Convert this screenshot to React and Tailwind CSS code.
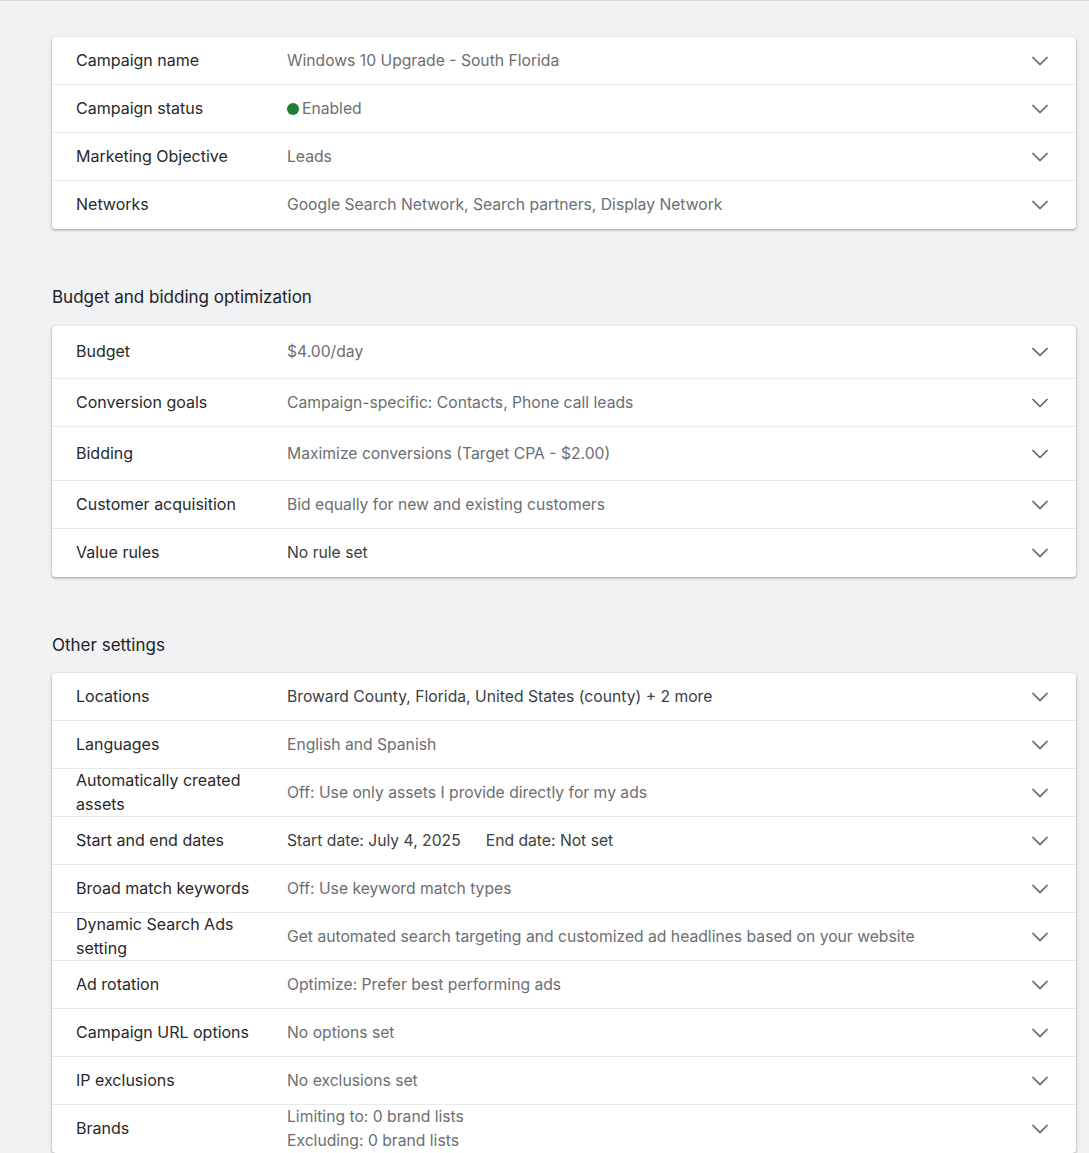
import { ChevronDown } from 'lucide-react'

const overview = [
  { label: 'Campaign name', value: 'Windows 10 Upgrade - South Florida' },
  { label: 'Campaign status', value: 'Enabled', status: true },
  { label: 'Marketing Objective', value: 'Leads' },
  { label: 'Networks', value: 'Google Search Network, Search partners, Display Network' },
]

const budget = [
  { label: 'Budget', value: '$4.00/day', h: 'h-[53px]' },
  { label: 'Conversion goals', value: 'Campaign-specific: Contacts, Phone call leads' },
  { label: 'Bidding', value: 'Maximize conversions (Target CPA - $2.00)', h: 'h-[54px]' },
  { label: 'Customer acquisition', value: 'Bid equally for new and existing customers' },
  { label: 'Value rules', value: 'No rule set', dark: true },
]

const other = [
  { label: 'Locations', value: 'Broward County, Florida, United States (county) + 2 more', dark: true },
  { label: 'Languages', value: 'English and Spanish' },
  { label: 'Automatically created assets', value: 'Off: Use only assets I provide directly for my ads' },
  { label: 'Start and end dates', dates: true, dark: true },
  { label: 'Broad match keywords', value: 'Off: Use keyword match types' },
  { label: 'Dynamic Search Ads setting', value: 'Get automated search targeting and customized ad headlines based on your website' },
  { label: 'Ad rotation', value: 'Optimize: Prefer best performing ads' },
  { label: 'Campaign URL options', value: 'No options set' },
  { label: 'IP exclusions', value: 'No exclusions set' },
  { label: 'Brands', lines: ['Limiting to: 0 brand lists', 'Excluding: 0 brand lists'] },
]

function Row({ row, last }) {
  return (
    <div
      className={`flex items-center pl-6 pr-[22px] ${row.h || 'h-12'} ${
        last ? '' : 'border-b border-[#e8eaed]'
      }`}
    >
      <div className="w-[211px] shrink-0 pr-4 -mt-[2px] text-[16px] leading-[24px] text-[#28292b]">
        {row.label}
      </div>
      <div
        className={`flex-1 text-[15.7px] leading-[24px] ${
          row.dark ? 'text-[#3c4043]' : 'text-[#6b6e72]'
        }`}
      >
        {row.status && (
          <span className="flex items-center gap-[3px]">
            <span className="inline-block h-[12px] w-[12px] rounded-full bg-[#1e7e34]" />
            {row.value}
          </span>
        )}
        {row.dates && (
          <span>
            Start date: July 4, 2025<span className="inline-block w-[25px]" />End date: Not set
          </span>
        )}
        {row.lines && row.lines.map((l) => <div key={l}>{l}</div>)}
        {!row.status && !row.dates && !row.lines && row.value}
      </div>
      <ChevronDown size={28} strokeWidth={1.5} className="shrink-0 text-[#5f6368]" />
    </div>
  )
}

function Card({ rows }) {
  return (
    <div className="rounded-[4px] bg-white shadow-[0_1px_2px_rgba(60,64,67,0.3),0_1px_3px_1px_rgba(60,64,67,0.15)]">
      {rows.map((r, i) => (
        <Row key={r.label} row={r} last={i === rows.length - 1} />
      ))}
    </div>
  )
}

export default function App() {
  return (
    <div
      className="min-h-[1153px] bg-[#f1f2f4] border-t border-[#dadce0]"
      style={{ fontFamily: 'Inter, "Noto Sans", sans-serif' }}
    >
      <div className="ml-[52px] mr-[13px] pt-[36px]">
        <Card rows={overview} />
        <h2 className="mt-[55px] mb-[16px] text-[17px] leading-[26px] text-[#202124]">
          Budget and bidding optimization
        </h2>
        <Card rows={budget} />
        <h2 className="mt-[55px] mb-[15px] text-[17px] leading-[26px] text-[#202124]">
          Other settings
        </h2>
        <Card rows={other} />
      </div>
    </div>
  )
}
